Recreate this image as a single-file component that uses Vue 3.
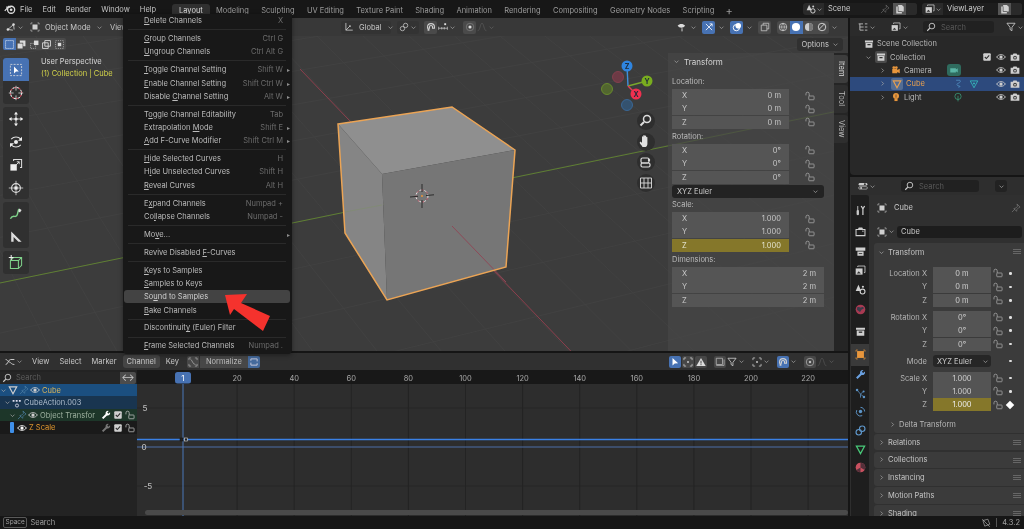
<template>
  <div class="app">
    <!-- shared icons -->
    <svg class="defs" width="0" height="0">
      <symbol id="i-lock" viewBox="0 0 16 16"><path d="M1.500 7V4.500a2.600 2.600 0 0 1 5.200 0V8" fill="none" stroke="currentColor" stroke-width="1.100"/><rect x="6" y="8" width="8.500" height="6" rx="1" fill="none" stroke="currentColor" stroke-width="1.100"/></symbol>
      <symbol id="i-eye" viewBox="0 0 16 16"><path d="M1 8c3.400-5 10.600-5 14 0c-3.400 5-10.600 5-14 0z" fill="none" stroke="currentColor" stroke-width="1.400"/><circle cx="8" cy="8" r="2.600" fill="currentColor"/></symbol>
      <symbol id="i-cam" viewBox="0 0 16 16"><path d="M1 4.500h3.500l1-2h5l1 2H15v9.500H1z" fill="currentColor"/><circle cx="8" cy="9" r="3" fill="#3a3a3a"/><circle cx="8" cy="9" r="1.400" fill="currentColor"/></symbol>
      <symbol id="i-search" viewBox="0 0 16 16"><circle cx="9.500" cy="6.500" r="4.500" fill="none" stroke="currentColor" stroke-width="1.400"/><path d="M6 10l-4 4" stroke="currentColor" stroke-width="1.800"/></symbol>
      <symbol id="i-down" viewBox="0 0 16 16"><path d="M3.500 6l4.500 4.500L12.500 6" fill="none" stroke="currentColor" stroke-width="1.600"/></symbol>
      <symbol id="i-right" viewBox="0 0 16 16"><path d="M6 3.500l4.500 4.500L6 12.500" fill="none" stroke="currentColor" stroke-width="1.600"/></symbol>
      <symbol id="i-cube" viewBox="0 0 16 16"><rect x="4" y="4" width="8" height="8" fill="currentColor"/><path d="M1.500 4V1.500H4M12 1.500h2.500V4M14.500 12v2.500H12M4 14.500H1.500V12" fill="none" stroke="currentColor" stroke-width="1"/></symbol>
      <symbol id="i-filter" viewBox="0 0 16 16"><path d="M1.500 2h13L9.500 8.500V14l-3-2V8.500z" fill="none" stroke="currentColor" stroke-width="1.300"/></symbol>
      <symbol id="i-pin" viewBox="0 0 16 16"><path d="M9.500 1.500l5 5-2 .8-3 3-.6 3L4.500 8.900l3-.7 3-3zM6.500 9.500L1.500 14.500" fill="none" stroke="currentColor" stroke-width="1.100"/></symbol>
      <symbol id="i-copy" viewBox="0 0 16 16"><path d="M2 4h3V1.500h6l3 3V12h-3v3H2z" fill="currentColor"/><path d="M5 4v8h6" fill="none" stroke="#333" stroke-width="1"/></symbol>
      <symbol id="i-layer" viewBox="0 0 16 16"><rect x="1" y="5" width="10" height="9" fill="currentColor"/><path d="M4 3V1.500h10.500V11H13" fill="none" stroke="currentColor" stroke-width="1.200"/><path d="M2.500 12.500l3-3.500 3 3.500z" fill="#333"/></symbol>
      <symbol id="i-scene" viewBox="0 0 16 16"><path d="M5 1L9 10H1z" fill="currentColor"/><circle cx="11" cy="11" r="3.500" fill="none" stroke="currentColor" stroke-width="1.600"/><circle cx="11.500" cy="4" r="1.600" fill="currentColor"/></symbol>
      <symbol id="i-box" viewBox="0 0 16 16"><path d="M1.500 2.500h13v3h-13zM2.500 6.500h11v7.500h-11z" fill="currentColor"/><rect x="5.500" y="8" width="5" height="2" fill="#333"/></symbol>
      <symbol id="i-mesh" viewBox="0 0 16 16"><path d="M2 3h12L8 14z" fill="none" stroke="currentColor" stroke-width="1.800"/></symbol>
      <symbol id="i-wrench" viewBox="0 0 16 16"><path d="M14.500 3.500l-2.700 2.400-1.800-1.800L12.400 1.500a4 4 0 0 0-5 5L1.500 12.300 3.700 14.500l5.900-5.900a4 4 0 0 0 4.900-5.100z" fill="currentColor"/></symbol>
      <symbol id="i-check" viewBox="0 0 16 16"><rect x="2" y="2" width="12" height="12" rx="1.500" fill="currentColor"/><path d="M4.500 8l2.500 2.500 4.500-5" fill="none" stroke="#2a2a2a" stroke-width="1.700"/></symbol>
      <symbol id="i-editor" viewBox="0 0 16 16"><path d="M1 12c4 0 4-8 8-8h6M1 4c3 0 3 3 6 4s3 4 8 4" fill="none" stroke="currentColor" stroke-width="1.500"/></symbol>
      <symbol id="i-tools" viewBox="0 0 16 16"><path d="M4 1.500v6M3 8h2v6H3z" stroke="currentColor" stroke-width="1.300" fill="currentColor"/><path d="M9 1.500l2.500 4 2.500-4M11.500 5.500V14.500" fill="none" stroke="currentColor" stroke-width="1.800"/></symbol>
      <symbol id="i-render" viewBox="0 0 16 16"><path d="M1.500 5h13v9h-13z" fill="none" stroke="currentColor" stroke-width="1.500"/><path d="M4 5l1.500-3h5L12 5z" fill="currentColor"/><circle cx="11.500" cy="7.500" r="1" fill="currentColor"/></symbol>
      <symbol id="i-print" viewBox="0 0 16 16"><path d="M1 2h14v5H1zM3.500 8h9v6h-9z" fill="currentColor"/><path d="M5.500 11h5" stroke="#333" stroke-width="1.300"/></symbol>
      <symbol id="i-pivot" viewBox="0 0 16 16"><path d="M1.500 5V1.500H5M11 1.500h3.500V5M14.500 11v3.500H11M5 14.500H1.500V11" fill="none" stroke="currentColor" stroke-width="1.200"/><circle cx="8" cy="8" r="1.500" fill="currentColor"/></symbol>
      <symbol id="i-snap" viewBox="0 0 16 16"><path d="M2.500 8a5.500 5.500 0 1 1 11 0v2h-3V8a2.500 2.500 0 0 0-5 0v2h-3z" fill="none" stroke="currentColor" stroke-width="1.800"/><path d="M2.500 11h3v3h-3z" fill="currentColor"/></symbol>
      <symbol id="i-world" viewBox="0 0 16 16"><circle cx="8" cy="8" r="7" fill="#a83a52"/><path d="M3 5c3-2 4 1 6 0s3-1 4 1c-2 2-3 1-4 3s-2 3-3 2-1-2-3-2z" fill="#3c3c4a"/></symbol>
      <symbol id="i-obj" viewBox="0 0 16 16"><rect x="3" y="3" width="10" height="10" fill="currentColor"/><path d="M1.500 4V1.500H4M12 1.500h2.500V4M14.500 12v2.500H12M4 14.500H1.500V12" fill="none" stroke="currentColor" stroke-width="1"/></symbol>
      <symbol id="i-part" viewBox="0 0 16 16"><circle cx="3" cy="3" r="1.800" fill="currentColor"/><circle cx="12.500" cy="5" r="1.500" fill="currentColor"/><circle cx="13" cy="13" r="1.800" fill="currentColor"/><path d="M4 4l4 5 5 4M8 9l4-4M8 9v5" fill="none" stroke="currentColor" stroke-width="1.100"/></symbol>
      <symbol id="i-phys" viewBox="0 0 16 16"><circle cx="8" cy="8" r="2.500" fill="currentColor"/><path d="M2.500 6a6 6 0 0 0 8 8M8 2a6 6 0 0 1 6 6" fill="none" stroke="currentColor" stroke-width="1.400"/></symbol>
      <symbol id="i-cons" viewBox="0 0 16 16"><circle cx="5.500" cy="10.500" r="4" fill="none" stroke="currentColor" stroke-width="1.700"/><circle cx="10.500" cy="5.500" r="4" fill="none" stroke="currentColor" stroke-width="1.700"/></symbol>
      <symbol id="i-mat" viewBox="0 0 16 16"><circle cx="8" cy="8" r="7" fill="#c8505f"/><path d="M8 8V1a7 7 0 0 1 6 10.500zM8 8l-6 3.500A7 7 0 0 0 8 15z" fill="#55303a"/></symbol>
    </svg>

    <!-- top bar -->
    <header class="topbar">
      <svg class="logo" viewBox="0 0 16 16"><circle cx="9.500" cy="9" r="4.700" fill="none" stroke="#ddd" stroke-width="1.800"/><circle cx="9.500" cy="9" r="1.800" fill="#ddd"/><path d="M1 10.500l6-6.500M3 5.500h6" stroke="#ddd" stroke-width="1.600"/></svg>
      <nav class="mainmenu">
        <span v-for="m in mainMenu" :key="m">{{ m }}</span>
      </nav>
      <nav class="tabs">
        <span v-for="t in workspaces" :key="t" :class="['tab', { active: t === 'Layout' }]">{{ t }}</span>
        <span class="tab plus">+</span>
      </nav>
      <div class="selector scene-sel">
        <svg class="ic"><use href="#i-scene" /></svg>
        <svg class="ic tiny"><use href="#i-down" /></svg>
        <span class="sel-name">Scene</span>
        <svg class="ic dim"><use href="#i-pin" /></svg>
        <span class="sel-btn"><svg class="ic"><use href="#i-copy" /></svg></span>
        <span class="sel-x"></span>
      </div>
      <div class="selector layer-sel">
        <svg class="ic"><use href="#i-layer" /></svg>
        <svg class="ic tiny"><use href="#i-down" /></svg>
        <span class="sel-name">ViewLayer</span>
        <span class="sel-btn"><svg class="ic"><use href="#i-copy" /></svg></span>
        <span class="sel-x"></span>
      </div>
    </header>

    <div class="work">
      <div class="left">
        <!-- 3d viewport -->
        <section class="viewport">
          <svg class="scene" viewBox="0 18 848 333">
            <line v-for="(l, i) in gridLines" :key="i" :x1="l[0]" :y1="l[1]" :x2="l[2]" :y2="l[3]" stroke="#444" stroke-width="0.7" />
            <line x1="-200" y1="324" x2="848" y2="109" stroke="#5f7f33" stroke-width="1" />
            <line x1="300" y1="69" x2="660" y2="444" stroke="#8e3f4d" stroke-width="1" />
            <polygon points="338,124 452,107 515,150 382,174" fill="#8f8f8f" />
            <polygon points="338,124 382,174 387,300 345,233" fill="#858585" />
            <polygon points="382,174 515,150 506,267 387,300" fill="#767676" />
            <line x1="452" y1="226" x2="506" y2="282" stroke="#8e4a58" stroke-width="1" />
            <line x1="345" y1="212" x2="382" y2="205" stroke="#7f8d70" stroke-width="0.7" />
            <polygon points="338,124 452,107 515,150 506,267 387,300 345,233" fill="none" stroke="#eba455" stroke-width="1.500" />
            <!-- 3d cursor -->
            <circle cx="422" cy="196" r="6" fill="none" stroke="#e8e8e8" stroke-width="1" stroke-dasharray="3 2" />
            <circle cx="422" cy="196" r="6" fill="none" stroke="#b9475a" stroke-width="1" stroke-dasharray="2 3" stroke-dashoffset="3" />
            <path d="M422 184v8M422 200v8M410 197l8-.7M426 195.500l8-.7" stroke="#2b2b2b" stroke-width="1" />
            <circle cx="422" cy="196" r="1" fill="#e8953a" />
            <!-- gizmo -->
            <line x1="628" y1="86" x2="627" y2="66" stroke="#3f8fdc" stroke-width="1.400" />
            <line x1="628" y1="86" x2="647" y2="81" stroke="#79a72c" stroke-width="1.400" />
            <line x1="628" y1="86" x2="636" y2="94" stroke="#e0405a" stroke-width="1.400" />
            <circle cx="618" cy="77" r="5.500" fill="#6d3a45" stroke="#8e4050" stroke-width="0.800" />
            <circle cx="607" cy="89" r="5.500" fill="#52662f" stroke="#71982b" stroke-width="0.800" />
            <circle cx="627" cy="105" r="5.500" fill="#34526f" stroke="#3a6fa5" stroke-width="0.800" />
            <circle cx="627" cy="66" r="5.500" fill="#2f85e0" />
            <circle cx="647" cy="81" r="5.500" fill="#79ad1f" />
            <circle cx="636" cy="94" r="5.500" fill="#f0304f" />
            <text x="627" y="68.500" class="gz">Z</text>
            <text x="647" y="83.500" class="gz">Y</text>
            <text x="636" y="96.500" class="gz">X</text>
            <!-- nav buttons -->
            <circle v-for="y in [121, 142, 162, 183]" :key="y" cx="646" :cy="y" r="9" fill="#2e2e2e" />
            <circle cx="647" cy="119" r="3.500" fill="none" stroke="#ddd" stroke-width="1.500" />
            <path d="M644 122l-3.500 3.500" stroke="#ddd" stroke-width="2" />
            <path d="M642 146c-2-2-2.800-3.500-2-4s1.500.5 2 1v-6c0-1 1.300-1 1.300 0v4v-5.200c0-1 1.400-1 1.400 0V141v-4.800c0-1 1.400-1 1.400 0V141v-3.500c0-1 1.300-1 1.300 0V144c0 1.500-1 3-2 3h-3z" fill="#e0e0e0" />
            <rect x="641" y="158" width="8" height="5" rx="1.500" fill="none" stroke="#ddd" stroke-width="1.200" />
            <rect x="641" y="163" width="9" height="4" rx="1.500" fill="none" stroke="#ddd" stroke-width="1.200" />
            <circle cx="649" cy="160" r="1.200" fill="#ddd" />
            <path d="M640.500 178h11v10h-11zM640.500 183h11M644 178v10M648 178v10" fill="none" stroke="#ddd" stroke-width="0.900" />
          </svg>

          <div class="vp-head">
            <span class="vp-mode">
              <svg class="ic" viewBox="0 0 16 16"><path d="M3 12L12 4M3 12l8 1M12 4l1 8" fill="none" stroke="#ddd" stroke-width="1.200"/><circle cx="3" cy="12" r="2" fill="#ddd"/><circle cx="12" cy="4" r="2" fill="#ddd"/></svg>
              <svg class="ic tiny"><use href="#i-down" /></svg>
            </span>
            <span class="vp-select">
              <svg class="ic"><use href="#i-cube" /></svg>
              Object Mode
              <svg class="ic tiny"><use href="#i-down" /></svg>
            </span>
            <span class="vp-view">View</span>
            <span class="vp-orient">
              <span class="vp-global">
                <svg class="ic" viewBox="0 0 16 16"><path d="M3 1.500V13h11M3 13l6-6" fill="none" stroke="#ccc" stroke-width="1.300"/><circle cx="9.500" cy="6.500" r="1.500" fill="#ccc"/></svg>
                Global
                <svg class="ic tiny"><use href="#i-down" /></svg>
              </span>
              <span class="vp-link">
                <svg class="ic" viewBox="0 0 16 16"><circle cx="5.500" cy="10.500" r="3.500" fill="none" stroke="#ccc" stroke-width="1.200"/><circle cx="10.500" cy="5.500" r="3.500" fill="none" stroke="#ccc" stroke-width="1.200"/></svg>
                <svg class="ic tiny"><use href="#i-down" /></svg>
              </span>
              <span class="hl-gray"><svg class="ic" viewBox="0 0 16 16"><use href="#i-snap" /></svg></span>
              <svg class="ic" viewBox="0 0 16 16"><path d="M1 10h14M1 7.500v5M15 7.500v5M6 8v4M10 8v4" fill="none" stroke="#ccc" stroke-width="1.100"/><rect x="10" y="2" width="3" height="3" fill="#ddd"/></svg>
              <svg class="ic tiny"><use href="#i-down" /></svg>
              <span class="hl-gray gap"><svg class="ic" viewBox="0 0 16 16"><circle cx="8" cy="8" r="2.500" fill="#ddd"/><circle cx="8" cy="8" r="6" fill="none" stroke="#888"/></svg></span>
              <svg class="ic faint" viewBox="0 0 16 16"><path d="M1 14c4 0 4-12 7-12s3 12 7 12" fill="none" stroke="#888" stroke-width="1.200"/></svg>
              <svg class="ic tiny faint"><use href="#i-down" /></svg>
            </span>
            <span class="vp-right">
              <svg class="ic" viewBox="0 0 16 16"><path d="M1 6c3-4 9-4 12 0c-3 4-9 4-12 0z" fill="#ddd"/><path d="M8 10v5" stroke="#ddd" stroke-width="1.500"/></svg>
              <svg class="ic tiny"><use href="#i-down" /></svg>
              <span class="hl-blue"><svg class="ic" viewBox="0 0 16 16"><path d="M3 13L13 3M13 3H9M13 3v4M3 3l10 10" stroke="#fff" stroke-width="1.300" fill="none"/></svg></span>
              <svg class="ic tiny"><use href="#i-down" /></svg>
              <span class="hl-blue"><svg class="ic" viewBox="0 0 16 16"><circle cx="7" cy="9" r="5" fill="none" stroke="#fff" stroke-width="1.500"/><circle cx="10" cy="6" r="4.500" fill="#fff"/></svg></span>
              <svg class="ic tiny"><use href="#i-down" /></svg>
              <span class="hl-gray"><svg class="ic" viewBox="0 0 16 16"><path d="M2 5h9v9H2zM5 5V2h9v9h-3" fill="none" stroke="#ccc" stroke-width="1.200"/></svg></span>
              <span class="shading">
                <span><svg class="ic" viewBox="0 0 16 16"><circle cx="8" cy="8" r="6" fill="none" stroke="#ddd" stroke-width="1.100"/><path d="M2 8h12M8 2c-3 4-3 8 0 12M8 2c3 4 3 8 0 12" fill="none" stroke="#ddd" stroke-width="0.900"/></svg></span>
                <span class="on"><svg class="ic" viewBox="0 0 16 16"><circle cx="8" cy="8" r="6.500" fill="#fff"/></svg></span>
                <span><svg class="ic" viewBox="0 0 16 16"><circle cx="8" cy="8" r="6.500" fill="#ccc"/><path d="M8 1.500a6.500 6.500 0 0 1 0 13z" fill="#777"/></svg></span>
                <span><svg class="ic" viewBox="0 0 16 16"><circle cx="8" cy="8" r="6" fill="none" stroke="#ddd" stroke-width="1.400"/><path d="M3 12L12 3" stroke="#ddd" stroke-width="1.400"/></svg></span>
              </span>
              <svg class="ic tiny"><use href="#i-down" /></svg>
            </span>
          </div>

          <div class="vp-sub">
            <span class="selmodes">
              <span class="on"><svg class="ic" viewBox="0 0 16 16"><rect x="1" y="1" width="14" height="14" fill="none" stroke="#fff" stroke-width="1.300" stroke-dasharray="2 1.500"/></svg></span>
              <span><svg class="ic" viewBox="0 0 16 16"><path d="M1 6h9v9H1zM5 5V1h10v10h-4V5z" fill="#ddd"/></svg></span>
              <span><svg class="ic" viewBox="0 0 16 16"><path d="M7 1h8v8H7z" fill="#ddd"/><path d="M1 6h9v9H1z" fill="none" stroke="#ddd" stroke-dasharray="2 1.500"/></svg></span>
              <span><svg class="ic" viewBox="0 0 16 16"><path d="M5 1h10v10H5z" fill="none" stroke="#ddd" stroke-width="1.600"/><path d="M1 5h10v10H1z" fill="none" stroke="#ddd" stroke-width="1.600"/></svg></span>
              <span><svg class="ic" viewBox="0 0 16 16"><rect x="5" y="5" width="6" height="6" fill="#ddd"/><rect x="1" y="1" width="14" height="14" fill="none" stroke="#ddd" stroke-dasharray="2 2"/></svg></span>
            </span>
            <span class="options">Options <svg class="ic tiny"><use href="#i-down" /></svg></span>
          </div>

          <div class="persp">
            <div>User Perspective</div>
            <div class="persp-sel">(1) Collection | Cube</div>
          </div>

          <!-- toolbar -->
          <div class="toolbar">
            <div class="tool-group">
              <span class="tool active"><svg viewBox="0 0 20 20"><rect x="3" y="3" width="14" height="14" fill="none" stroke="#ddd" stroke-dasharray="2.500 1.500"/><path d="M7.500 5.500v9l2.500-2.500 3.500-.2z" fill="#fff"/></svg></span>
              <span class="tool"><svg viewBox="0 0 20 20"><circle cx="10" cy="10" r="7" fill="none" stroke="#eee" stroke-width="1.300" stroke-dasharray="3 2.500"/><circle cx="10" cy="10" r="7" fill="none" stroke="#d2475a" stroke-width="1.300" stroke-dasharray="2.500 3" stroke-dashoffset="3"/><path d="M10 1v6M10 13v6M1 10h6M13 10h6" stroke="#ddd"/></svg></span>
            </div>
            <div class="tool-group">
              <span class="tool"><svg viewBox="0 0 20 20"><path d="M10 2v16M2 10h16" stroke="#ddd" stroke-width="1.100"/><path d="M10 1l2.500 3.500h-5zM10 19l2.500-3.500h-5zM1 10l3.500-2.500v5zM19 10l-3.500-2.500v5z" fill="#eee"/><circle cx="10" cy="10" r="2" fill="#eee"/></svg></span>
              <span class="tool"><svg viewBox="0 0 20 20"><path d="M4 6.500a8 8 0 0 1 12 0M16 13.500a8 8 0 0 1-12 0" fill="none" stroke="#ddd" stroke-width="1.400"/><path d="M17.500 3.500v5h-5zM2.500 16.500v-5h5z" fill="#eee"/><circle cx="10" cy="10" r="2.500" fill="#eee"/></svg></span>
              <span class="tool"><svg viewBox="0 0 20 20"><rect x="3" y="9" width="8" height="8" fill="#eee"/><path d="M7 5V3h10v10h-2" fill="none" stroke="#ddd" stroke-width="1.300"/><path d="M10 10l4-4M11 6h3v3" fill="none" stroke="#ddd" stroke-width="1.200"/></svg></span>
              <span class="tool"><svg viewBox="0 0 20 20"><circle cx="10" cy="10" r="5.500" fill="none" stroke="#ddd" stroke-width="1.400"/><path d="M10 1v18M1 10h18" stroke="#ddd"/><rect x="8" y="8" width="4" height="4" fill="#eee"/></svg></span>
            </div>
            <div class="tool-group">
              <span class="tool"><svg viewBox="0 0 20 20"><path d="M3 16c3-6 6-1 8-4s1-7 3-8" fill="none" stroke="#7fd28a" stroke-width="1.800"/><path d="M14 3l3 2-2 3-2-1z" fill="#ddd"/></svg></span>
              <span class="tool"><svg viewBox="0 0 20 20"><path d="M4 3v13h13zM7 10v6h6z" fill="#ddd" fill-rule="evenodd"/></svg></span>
            </div>
            <div class="tool-group">
              <span class="tool"><svg viewBox="0 0 20 20"><path d="M3 7l4-4h10v10l-4 4H3zM3 7h10v10M13 7l4-4" fill="none" stroke="#7fd28a" stroke-width="1.300"/><path d="M1 3h6M4 0v6" stroke="#eee" stroke-width="1.300"/></svg></span>
            </div>
          </div>

          <!-- sidebar -->
          <aside class="npanel">
            <div class="np-title"><svg class="ic tiny"><use href="#i-down" /></svg> Transform</div>
            <template v-for="g in transformGroups" :key="g.label">
              <div v-if="g.select" class="np-select">{{ g.select }} <svg class="ic tiny"><use href="#i-down" /></svg></div>
              <div v-else class="np-group">
                <div class="np-label">{{ g.label }}</div>
                <div v-for="r in g.rows" :key="r[0]" class="np-row">
                  <div :class="['np-field', { wide: !g.lock, key: r[2] }]">
                    <span>{{ r[0] }}</span><span>{{ r[1] }}</span>
                  </div>
                  <svg v-if="g.lock" class="ic lock"><use href="#i-lock" /></svg>
                </div>
              </div>
            </template>
          </aside>
          <div class="np-tabs">
            <span class="active">Item</span>
            <span>Tool</span>
            <span>View</span>
          </div>
        </section>

        <!-- graph editor -->
        <section class="timeline">
          <div class="tl-head">
            <svg class="ic"><use href="#i-editor" /></svg>
            <svg class="ic tiny"><use href="#i-down" /></svg>
            <span class="tl-menu">
              <span v-for="m in graphMenu" :key="m" :class="{ open: m === 'Channel' }">{{ m }}</span>
            </span>
            <span class="normalize">
              <span class="nm-icon"><svg class="ic" viewBox="0 0 16 16"><path d="M1.500 5V1.500H5M11 1.500h3.500V5M14.500 11v3.500H11M5 14.500H1.500V11M4 4c3 0 3 8 8 8" fill="none" stroke="#bbb"/></svg></span>
              <span class="nm-text">Normalize</span>
              <span class="nm-auto"><svg class="ic" viewBox="0 0 16 16"><path d="M3 6V3h10v4M13 10v3H3V9" fill="none" stroke="#ccd" stroke-width="1.500"/></svg></span>
            </span>
            <span class="tl-right">
              <span class="blue-btn"><svg class="ic" viewBox="0 0 16 16"><path d="M4 1.500v12l3.500-3 5.500-.5z" fill="#fff"/></svg></span>
              <span class="gray-btn"><svg class="ic"><use href="#i-pivot" /></svg></span>
              <span class="gray-btn"><svg class="ic" viewBox="0 0 16 16"><path d="M8 1.500L15.500 14.500H.5z" fill="#ddd"/><path d="M8 6v4.500M8 11.500v1.500" stroke="#333" stroke-width="1.400"/></svg></span>
              <span class="gray-btn gap"><svg class="ic" viewBox="0 0 16 16"><path d="M2 2h10v10H2zM2 13.500h12.500V4" fill="none" stroke="#bbb" stroke-width="1.200"/></svg></span>
              <svg class="ic"><use href="#i-filter" /></svg>
              <svg class="ic tiny"><use href="#i-down" /></svg>
              <svg class="ic gap"><use href="#i-pivot" /></svg>
              <svg class="ic tiny"><use href="#i-down" /></svg>
              <span class="blue-btn gap"><svg class="ic"><use href="#i-snap" /></svg></span>
              <svg class="ic tiny"><use href="#i-down" /></svg>
              <span class="gray-btn gap"><svg class="ic" viewBox="0 0 16 16"><circle cx="8" cy="8" r="6" fill="none" stroke="#999" stroke-width="1.600"/><circle cx="8" cy="8" r="2" fill="#bbb"/></svg></span>
              <svg class="ic faint" viewBox="0 0 16 16"><path d="M1 14c4 0 4-12 7-12s3 12 7 12" fill="none" stroke="#888" stroke-width="1.200"/></svg>
              <svg class="ic tiny faint"><use href="#i-down" /></svg>
            </span>
          </div>
          <div class="tl-body">
            <div class="channels">
              <div class="ch-search">
                <span class="ch-input"><svg class="ic"><use href="#i-search" /></svg> Search</span>
                <span class="ch-swap">↔</span>
              </div>
              <div class="ch-row c-obj">
                <svg class="ic tiny"><use href="#i-down" /></svg>
                <svg class="ic"><use href="#i-mesh" /></svg>
                <svg class="ic pinned"><use href="#i-pin" /></svg>
                <svg class="ic"><use href="#i-eye" /></svg>
                <span class="c-name gold">Cube</span>
              </div>
              <div class="ch-row c-act">
                <svg class="ic tiny ind"><use href="#i-down" /></svg>
                <svg class="ic" viewBox="0 0 16 16"><path d="M1 3h3v3H1zM6 3h3v3H6zM11 3h3v3h-3z" fill="#dde"/><circle cx="8" cy="12" r="2.500" fill="none" stroke="#dde" stroke-width="1.300"/></svg>
                <span class="c-name">CubeAction.003</span>
              </div>
              <div class="ch-row c-grp">
                <svg class="ic tiny ind"><use href="#i-down" /></svg>
                <svg class="ic pinned"><use href="#i-pin" /></svg>
                <svg class="ic"><use href="#i-eye" /></svg>
                <span class="c-name clip">Object Transfor</span>
                <span class="c-tail">
                  <svg class="ic white"><use href="#i-wrench" /></svg>
                  <svg class="ic"><use href="#i-check" /></svg>
                  <svg class="ic"><use href="#i-lock" /></svg>
                </span>
              </div>
              <div class="ch-row c-cur">
                <i class="swatch"></i>
                <svg class="ic white"><use href="#i-eye" /></svg>
                <span class="c-name orange">Z Scale</span>
                <span class="c-tail">
                  <svg class="ic faded"><use href="#i-wrench" /></svg>
                  <svg class="ic"><use href="#i-check" /></svg>
                  <svg class="ic"><use href="#i-lock" /></svg>
                </span>
              </div>
            </div>
            <svg class="graph" viewBox="137 369 711 147">
              <rect x="137" y="369" width="711" height="147" fill="#2d2d2d" />
              <line v-for="y in [407, 485]" :key="y" x1="137" :y1="y" x2="848" :y2="y" stroke="#272727" />
              <line v-for="f in frames" :key="f.n" :x1="f.x" y1="383" :x2="f.x" y2="516" stroke="#232323" />
              <rect x="137" y="369" width="711" height="14" fill="#181818" />
              <text v-for="f in frames" :key="f.n" :x="f.x" y="379.500" class="frame">{{ f.n }}</text>
              <line x1="137" y1="446" x2="848" y2="446" stroke="#4d6ea8" stroke-width="1" />
              <line x1="137" y1="438.500" x2="848" y2="438.500" stroke="#3a80e4" stroke-width="1.500" />
              <text x="145" y="410" class="val">5</text>
              <text x="144" y="449" class="val">0</text>
              <text x="148" y="488" class="val">-5</text>
              <line x1="183" y1="383" x2="183" y2="516" stroke="#4b78ba" />
              <rect x="175" y="371" width="16" height="11.500" rx="2.500" fill="#4772b3" />
              <text x="183" y="380" class="pill">1</text>
              <rect x="180" y="437" width="3" height="3" fill="#222" stroke="#111" stroke-width="0.500" />
              <rect x="184.500" y="437" width="3" height="3" fill="#222" stroke="#ddd" stroke-width="0.600" />
              <rect x="145" y="509" width="703" height="5" rx="2.500" fill="#4a4a4a" />
            </svg>
          </div>
        </section>
      </div>

      <div class="right">
        <!-- outliner -->
        <section class="outliner">
          <div class="ol-head">
            <svg class="ic" viewBox="0 0 16 16"><path d="M1 3h7M3 3v10h6M3 8h6M11 3h4M11 8h4M11 13h4" fill="none" stroke="#ccc" stroke-width="1.300"/></svg>
            <svg class="ic tiny"><use href="#i-down" /></svg>
            <svg class="ic ml"><use href="#i-layer" /></svg>
            <svg class="ic tiny"><use href="#i-down" /></svg>
            <span class="search ol-search"><svg class="ic"><use href="#i-search" /></svg> Search</span>
            <svg class="ic"><use href="#i-filter" /></svg>
            <svg class="ic tiny"><use href="#i-down" /></svg>
          </div>
          <div class="ol-row">
            <svg class="ic"><use href="#i-box" /></svg>
            <span>Scene Collection</span>
          </div>
          <div class="ol-row">
            <svg class="ic tiny"><use href="#i-down" /></svg>
            <span class="icon-bg"><svg class="ic"><use href="#i-box" /></svg></span>
            <span>Collection</span>
            <span class="ol-tail">
              <svg class="ic"><use href="#i-check" /></svg>
              <svg class="ic"><use href="#i-eye" /></svg>
              <svg class="ic"><use href="#i-cam" /></svg>
            </span>
          </div>
          <div v-for="o in objects" :key="o.name" :class="['ol-row', 'ol-child', { selected: o.selected }]">
            <svg class="ic tiny"><use href="#i-right" /></svg>
            <span v-if="o.selected" class="icon-bg orange-bg"><svg class="ic orange-ic"><use href="#i-mesh" /></svg></span>
            <svg v-else-if="o.name === 'Camera'" class="ic" viewBox="0 0 16 16"><path d="M2 6h8v7H2zM10 8l4-2v7l-4-2" fill="#e8963c"/><circle cx="4.500" cy="4" r="2.200" fill="#e8963c"/><circle cx="8.500" cy="4" r="2.200" fill="#e8963c"/></svg>
            <svg v-else class="ic" viewBox="0 0 16 16"><circle cx="8" cy="6.500" r="4.800" fill="#e8963c"/><rect x="5.500" y="11" width="5" height="3.500" fill="#e8963c"/><path d="M8 4v5" stroke="#333"/></svg>
            <span class="ol-name">{{ o.name }}</span>
            <span class="ol-data" :style="{ marginLeft: o.dataX + 'px' }">
              <span v-if="o.name === 'Camera'" class="teal-box"><svg class="ic" viewBox="0 0 16 16"><path d="M2 5h9v7H2zM11 7l3-2v7l-3-2" fill="#5bb5a5"/></svg></span>
              <template v-if="o.selected">
                <svg class="ic" viewBox="0 0 16 16"><path d="M5 2h6c2 2 0 4-3 5s-2 4 3 5M11 12l-2-2M11 12l-2 2" fill="none" stroke="#5a9fd0" stroke-width="1"/></svg>
                <svg class="ic teal" viewBox="0 0 16 16"><path d="M2 3h12L8 14z" fill="none" stroke="#35c0c0" stroke-width="1.300"/><circle cx="8" cy="7" r="1.500" fill="#35c0c0"/></svg>
              </template>
              <svg v-if="o.name === 'Light'" class="ic" viewBox="0 0 16 16"><circle cx="8" cy="7" r="5" fill="none" stroke="#3fb48a" stroke-width="1"/><path d="M8 6v9" stroke="#3fb48a"/></svg>
            </span>
            <span class="ol-tail">
              <svg class="ic"><use href="#i-eye" /></svg>
              <svg class="ic"><use href="#i-cam" /></svg>
            </span>
          </div>
        </section>

        <!-- properties -->
        <section class="props">
          <div class="pr-head">
            <svg class="ic" viewBox="0 0 16 16"><rect x="1" y="3" width="14" height="4" rx="2" fill="#ccc"/><rect x="1" y="9" width="14" height="4" rx="2" fill="none" stroke="#ccc"/><circle cx="11" cy="5" r="1.600" fill="#333"/><circle cx="5" cy="11" r="1.600" fill="#ccc"/></svg>
            <svg class="ic tiny"><use href="#i-down" /></svg>
            <span class="search pr-search"><svg class="ic"><use href="#i-search" /></svg> Search</span>
            <span class="pr-opt"><svg class="ic tiny"><use href="#i-down" /></svg></span>
          </div>
          <div class="pr-body">
            <div class="pr-tabs">
              <span v-for="t in propTabs" :key="t.id" :class="['pr-tab', { active: t.active }]" :style="{ height: t.h + 'px', color: t.color }">
                <svg class="ic big"><use :href="'#' + t.id" /></svg>
              </span>
            </div>
            <div class="pr-content">
              <div class="crumb">
                <svg class="ic"><use href="#i-cube" /></svg>
                <span>Cube</span>
                <svg class="ic pin-r"><use href="#i-pin" /></svg>
              </div>
              <div class="name-row">
                <svg class="ic"><use href="#i-cube" /></svg>
                <svg class="ic tiny"><use href="#i-down" /></svg>
                <span class="name-field">Cube</span>
              </div>
              <div class="panel open">
                <div class="panel-head">
                  <svg class="ic tiny"><use href="#i-down" /></svg>
                  <span>Transform</span>
                  <i class="grip"></i>
                </div>
                <div v-for="(g, gi) in propGroups" :key="gi" class="pf-group">
                  <div v-for="r in g" :key="r.label" class="pf-row">
                    <span class="pf-label">{{ r.label }}</span>
                    <span :class="['pf-field', { key: r.key }]">{{ r.value }}</span>
                    <svg class="ic lock"><use href="#i-lock" /></svg>
                    <i :class="['dot', { diamond: r.key }]"></i>
                  </div>
                </div>
                <div class="pf-group">
                  <div class="pf-row">
                    <span class="pf-label">Mode</span>
                    <span class="pf-select">XYZ Euler <svg class="ic tiny"><use href="#i-down" /></svg></span>
                    <span class="lock-space"></span>
                    <i class="dot"></i>
                  </div>
                </div>
                <div v-for="(g, gi) in scaleGroups" :key="'s' + gi" class="pf-group">
                  <div v-for="r in g" :key="r.label" class="pf-row">
                    <span class="pf-label">{{ r.label }}</span>
                    <span :class="['pf-field', { key: r.key }]">{{ r.value }}</span>
                    <svg class="ic lock"><use href="#i-lock" /></svg>
                    <i :class="['dot', { diamond: r.key }]"></i>
                  </div>
                </div>
                <div class="delta"><svg class="ic tiny"><use href="#i-right" /></svg> Delta Transform</div>
              </div>
              <div v-for="p in closedPanels" :key="p" class="panel">
                <div class="panel-head">
                  <svg class="ic tiny"><use href="#i-right" /></svg>
                  <span>{{ p }}</span>
                  <i class="grip"></i>
                </div>
              </div>
            </div>
          </div>
        </section>
      </div>
    </div>

    <footer class="status">
      <span class="kbd">Space</span>
      <span>Search</span>
      <span class="status-right">
        <svg class="ic" viewBox="0 0 16 16"><path d="M3 4l8-2 3 8-8 3zM2 2l12 12" fill="none" stroke="#aaa" stroke-width="1.100"/></svg>
        <i class="st-sep"></i>
        4.3.2
      </span>
    </footer>

    <!-- channel menu -->
    <div class="menu">
      <template v-for="(item, i) in channelMenu" :key="i">
        <div v-if="item === '-'" class="menu-sep"></div>
        <div v-else :class="['menu-row', { hover: item.hover }]">
          <span class="menu-label">{{ parts(item.t)[0] }}<u>{{ parts(item.t)[1] }}</u>{{ parts(item.t)[2] }}</span>
          <span class="menu-key">{{ item.k }}</span>
          <span class="menu-sub">{{ item.sub ? '▸' : '' }}</span>
        </div>
      </template>
    </div>

    <svg class="arrow" viewBox="0 0 60 45">
      <polygon points="5,6 27,5 21,14 50,27 43,42 14,20 10,26" fill="#f5322d" />
    </svg>
  </div>
</template>

<script setup>
const mainMenu = ['File', 'Edit', 'Render', 'Window', 'Help']
const workspaces = ['Layout', 'Modeling', 'Sculpting', 'UV Editing', 'Texture Paint', 'Shading', 'Animation', 'Rendering', 'Compositing', 'Geometry Nodes', 'Scripting']
const graphMenu = ['View', 'Select', 'Marker', 'Channel', 'Key']

const parts = (text) => {
  const i = text.indexOf('&')
  return [text.slice(0, i), text[i + 1], text.slice(i + 2)]
}

const channelMenu = [
  { t: '&Delete Channels', k: 'X' },
  '-',
  { t: '&Group Channels', k: 'Ctrl G' },
  { t: '&Ungroup Channels', k: 'Ctrl Alt G' },
  '-',
  { t: '&Toggle Channel Setting', k: 'Shift W', sub: true },
  { t: '&Enable Channel Setting', k: 'Shift Ctrl W', sub: true },
  { t: 'Disable &Channel Setting', k: 'Alt W', sub: true },
  '-',
  { t: 'T&oggle Channel Editability', k: 'Tab' },
  { t: 'Extrapolation &Mode', k: 'Shift E', sub: true },
  { t: '&Add F-Curve Modifier', k: 'Shift Ctrl M', sub: true },
  '-',
  { t: '&Hide Selected Curves', k: 'H' },
  { t: 'H&ide Unselected Curves', k: 'Shift H' },
  { t: '&Reveal Curves', k: 'Alt H' },
  '-',
  { t: 'E&xpand Channels', k: 'Numpad +' },
  { t: 'Co&llapse Channels', k: 'Numpad -' },
  '-',
  { t: 'Mo&ve...', k: '', sub: true },
  '-',
  { t: 'Revive Disabled &F-Curves', k: '' },
  '-',
  { t: '&Keys to Samples', k: '' },
  { t: '&Samples to Keys', k: '' },
  { t: 'So&und to Samples', k: '', hover: true },
  { t: '&Bake Channels', k: '' },
  '-',
  { t: 'Discontinuit&y (Euler) Filter', k: '' },
  '-',
  { t: '&Frame Selected Channels', k: 'Numpad .' }
]

const transformGroups = [
  { label: 'Location:', lock: true, rows: [['X', '0 m'], ['Y', '0 m'], ['Z', '0 m']] },
  { label: 'Rotation:', lock: true, rows: [['X', '0°'], ['Y', '0°'], ['Z', '0°']] },
  { label: 'euler', select: 'XYZ Euler' },
  { label: 'Scale:', lock: true, rows: [['X', '1.000'], ['Y', '1.000'], ['Z', '1.000', true]] },
  { label: 'Dimensions:', lock: false, rows: [['X', '2 m'], ['Y', '2 m'], ['Z', '2 m']] }
]

const objects = [
  { name: 'Camera', dataX: 14 },
  { name: 'Cube', dataX: 18, selected: true },
  { name: 'Light', dataX: 20 }
]

const propTabs = [
  { id: 'i-tools', h: 23, color: '#d0d0d0' },
  { id: 'i-render', h: 20.5, color: '#d0d0d0' },
  { id: 'i-print', h: 19, color: '#d0d0d0' },
  { id: 'i-layer', h: 19.5, color: '#d0d0d0' },
  { id: 'i-scene', h: 18.5, color: '#d0d0d0' },
  { id: 'i-world', h: 20.5, color: '#c0405a' },
  { id: 'i-box', h: 24, color: '#d0d0d0' },
  { id: 'i-obj', h: 22, color: '#e8963c', active: true },
  { id: 'i-wrench', h: 18.5, color: '#6aa0e0' },
  { id: 'i-part', h: 18, color: '#5d95c8' },
  { id: 'i-phys', h: 19, color: '#5d95c8' },
  { id: 'i-cons', h: 19, color: '#5d95c8' },
  { id: 'i-mesh', h: 18.5, color: '#48c878' },
  { id: 'i-mat', h: 18.5, color: '#d05a6a' }
]

const propGroups = [
  [{ label: 'Location X', value: '0 m' }, { label: 'Y', value: '0 m' }, { label: 'Z', value: '0 m' }],
  [{ label: 'Rotation X', value: '0°' }, { label: 'Y', value: '0°' }, { label: 'Z', value: '0°' }]
]
const scaleGroups = [
  [{ label: 'Scale X', value: '1.000' }, { label: 'Y', value: '1.000' }, { label: 'Z', value: '1.000', key: true }]
]
const closedPanels = ['Relations', 'Collections', 'Instancing', 'Motion Paths', 'Shading']

const frames = []
for (let n = 20; n <= 220; n += 20) {
  frames.push({ n, x: 180 + n * 2.855 })
}

// ground plane grid, projected around the world origin
const project = (u, v) => {
  const w = 1 - 0.035 * u + 0.012 * v
  return [422 + (34 * u + 46 * v) / w, 196 + (36 * u - 9.5 * v) / w]
}
const gridLines = []
for (let i = -14; i <= 14; i++) {
  gridLines.push([...project(i, -14), ...project(i, 14)])
  gridLines.push([...project(-14, i), ...project(14, i)])
}
</script>

<style scoped>
.app {
  position: relative;
  width: 1024px;
  height: 529px;
  overflow: hidden;
  display: flex;
  flex-direction: column;
  background: #151515;
  color: #c8c8c8;
  font-family: Inter, "Liberation Sans", sans-serif;
  font-size: 7.500px;
  filter: blur(0.4px);
}

.defs {
  position: absolute;
}

.ic {
  width: 10px;
  height: 10px;
  flex: none;
  color: #cfcfcf;
}

.ic.tiny {
  width: 7px;
  height: 7px;
  color: #a8a8a8;
}

.gap {
  margin-left: 6px;
}

.faint {
  opacity: 0.4;
}

/* top bar */
.topbar {
  height: 18px;
  flex: none;
  display: flex;
  align-items: center;
  background: #171717;
}

.logo {
  width: 12px;
  height: 12px;
  margin-left: 4px;
}

.mainmenu {
  display: flex;
  gap: 10px;
  margin-left: 4px;
  width: 152px;
  color: #c4c4c4;
}

.tabs {
  display: flex;
  align-self: flex-end;
  height: 14px;
  color: #9c9c9c;
}

.tab {
  padding: 0 6.200px;
  line-height: 14px;
  white-space: nowrap;
}

.tab.active {
  background: #303030;
  border-radius: 3px 3px 0 0;
  color: #ddd;
  padding: 0 7px;
}

.tab.plus {
  font-size: 11px;
  padding: 0 5px;
}

.selector {
  position: absolute;
  top: 3px;
  height: 12px;
  display: flex;
  align-items: center;
  background: #2a2a2a;
  border-radius: 3px;
  padding-left: 3px;
  box-sizing: border-box;
}

.scene-sel {
  left: 803px;
  width: 114px;
}

.layer-sel {
  left: 922px;
  width: 100px;
}

.sel-name {
  flex: 1;
  background: #1d1d1d;
  height: 12px;
  line-height: 12px;
  padding-left: 4px;
  margin-left: 1px;
  color: #d0d0d0;
}

.sel-btn {
  background: #555;
  height: 12px;
  width: 13px;
  display: flex;
  align-items: center;
  justify-content: center;
}

.sel-x {
  width: 11px;
  height: 12px;
  background: #2a2a2a;
  border-radius: 0 3px 3px 0;
}

.scene-sel .dim {
  color: #666;
  margin-left: -13px;
  margin-right: 3px;
}

/* layout */
.work {
  flex: 1;
  min-height: 0;
  display: flex;
  gap: 2px;
}

.left {
  width: 848px;
  flex: none;
  display: flex;
  flex-direction: column;
  gap: 2px;
}

.right {
  width: 174px;
  flex: none;
  min-width: 0;
  display: flex;
  flex-direction: column;
  gap: 2px;
}

/* viewport */
.viewport {
  position: relative;
  height: 333px;
  flex: none;
  background: #3c3c3c;
  overflow: hidden;
}

.scene {
  position: absolute;
  inset: 0;
  width: 848px;
  height: 333px;
}

.gz {
  font-size: 7px;
  font-weight: 700;
  text-anchor: middle;
  fill: #1c2a3a;
}

.vp-head {
  position: relative;
  height: 18px;
  display: flex;
  align-items: center;
  background: #383838;
  padding-left: 6px;
}

.vp-mode {
  display: flex;
  align-items: center;
  gap: 1px;
  width: 24px;
}

.vp-select {
  display: flex;
  align-items: center;
  gap: 5px;
  width: 80px;
}

.vp-view {
  color: #c4c4c4;
}

.vp-orient {
  position: absolute;
  left: 341px;
  display: flex;
  align-items: center;
  gap: 1px;
}

.vp-global {
  width: 50px;
  height: 13px;
  background: #333;
  border-radius: 3px;
  display: flex;
  align-items: center;
  gap: 5px;
  padding-left: 3px;
  box-sizing: border-box;
}

.vp-link {
  display: flex;
  align-items: center;
  gap: 1px;
  background: #333;
  border-radius: 3px;
  height: 13px;
  padding: 0 2px;
  margin: 0 4px 0 5px;
}

.vp-right {
  position: absolute;
  left: 677px;
  display: flex;
  align-items: center;
  gap: 2.500px;
}

.hl-blue,
.hl-gray {
  width: 13px;
  height: 13px;
  border-radius: 2px;
  display: flex;
  align-items: center;
  justify-content: center;
  background: #4772b3;
  margin-left: 3px;
}

.hl-gray {
  background: #4a4a4a;
}

.vp-orient .hl-gray {
  margin-left: 0;
}

.vp-orient .hl-gray.gap {
  margin-left: 6px;
}

.shading {
  display: flex;
  background: #4a4a4a;
  border-radius: 3px;
  margin-left: 3px;
}

.shading span {
  width: 13px;
  height: 13px;
  display: flex;
  align-items: center;
  justify-content: center;
}

.shading .on {
  background: #4772b3;
}

.vp-sub {
  position: relative;
  height: 16px;
  display: flex;
  align-items: center;
  justify-content: space-between;
  padding: 0 5px 0 3px;
}

.selmodes {
  display: flex;
  background: #4a4a4a;
  border-radius: 2px;
}

.selmodes span {
  width: 12.500px;
  height: 12px;
  display: flex;
  align-items: center;
  justify-content: center;
}

.selmodes .on {
  background: #4772b3;
  border-radius: 2px 0 0 2px;
}

.selmodes .ic {
  width: 9px;
  height: 9px;
}

.options {
  display: flex;
  align-items: center;
  gap: 3px;
  background: #303030;
  height: 13px;
  padding: 0 4px 0 5px;
  border-radius: 3px;
}

.persp {
  position: absolute;
  left: 41px;
  top: 38px;
  line-height: 12px;
  color: #d8d8d8;
}

.persp-sel {
  color: #d4d44a;
}

.toolbar {
  position: absolute;
  left: 3px;
  top: 40px;
  width: 26px;
  display: flex;
  flex-direction: column;
  gap: 3px;
}

.tool-group {
  background: #303030;
  border-radius: 3px;
  overflow: hidden;
}

.tool {
  height: 23px;
  display: flex;
  align-items: center;
  justify-content: center;
}

.tool svg {
  width: 16px;
  height: 16px;
}

.tool.active {
  background: #4772b3;
}

.npanel {
  position: absolute;
  left: 668px;
  top: 35px;
  width: 166px;
  height: 298px;
  background: rgba(70, 70, 70, 0.72);
  padding: 0 10px 0 4px;
  box-sizing: border-box;
}

.np-title {
  height: 17px;
  margin-bottom: 4.300px;
  display: flex;
  align-items: center;
  gap: 4px;
  padding-left: 1px;
  font-size: 8px;
  color: #d4d4d4;
}

.np-label {
  height: 14.600px;
  line-height: 16px;
  color: #bbb;
}

.np-row {
  display: flex;
  align-items: center;
  height: 13.400px;
}

.np-field {
  width: 117px;
  height: 13px;
  background: #555;
  display: flex;
  justify-content: space-between;
  align-items: center;
  padding: 0 8px 0 10px;
  box-sizing: border-box;
  color: #c8c8c8;
}

.np-field.wide {
  width: 152px;
}

.np-field.key {
  background: #85772a;
  color: #e4e4d0;
}

.lock {
  margin-left: 16px;
  color: #b4b4b4;
}

.np-select {
  display: flex;
  justify-content: space-between;
  align-items: center;
  width: 152px;
  height: 13px;
  margin: 1.200px 0 -0.800px;
  background: #232323;
  border-radius: 3px;
  padding: 0 5px;
  box-sizing: border-box;
}

.np-tabs {
  position: absolute;
  left: 834px;
  top: 35px;
  width: 14px;
  height: 298px;
  padding-top: 2px;
  box-sizing: border-box;
  background: #252525;
  display: flex;
  flex-direction: column;
  gap: 2px;
  color: #bbb;
}

.np-tabs span {
  writing-mode: vertical-rl;
  height: 28px;
  display: flex;
  align-items: center;
  justify-content: center;
  background: #2e2e2e;
  border-radius: 0 3px 3px 0;
}

.np-tabs .active {
  background: #3d3d3d;
  color: #ddd;
}

/* graph editor */
.timeline {
  flex: 1;
  min-height: 0;
  display: flex;
  flex-direction: column;
  background: #2d2d2d;
}

.tl-head {
  position: relative;
  height: 17px;
  flex: none;
  display: flex;
  align-items: center;
  gap: 1px;
  background: #303030;
  padding-left: 5px;
}

.tl-menu {
  display: flex;
  margin-left: 4px;
  gap: 1px;
}

.tl-menu span {
  padding: 2px 4px;
  border-radius: 3px;
  margin-right: 1px;
}

.tl-menu .open {
  background: #454545;
}

.normalize {
  display: flex;
  align-items: center;
  margin-left: 2px;
  height: 12px;
}

.nm-icon {
  width: 12px;
  height: 12px;
  background: #474747;
  display: flex;
  align-items: center;
  justify-content: center;
  border-radius: 2px 0 0 2px;
}

.nm-text {
  background: #474747;
  height: 12px;
  line-height: 12px;
  width: 48px;
  padding-left: 6px;
  margin-left: 1px;
  box-sizing: border-box;
  color: #bdbdbd;
}

.nm-auto {
  width: 12px;
  height: 12px;
  background: #456a9c;
  display: flex;
  align-items: center;
  justify-content: center;
  border-radius: 0 2px 2px 0;
}

.tl-right {
  position: absolute;
  left: 669px;
  display: flex;
  align-items: center;
  gap: 1px;
}

.blue-btn,
.gray-btn {
  width: 12px;
  height: 12px;
  background: #4772b3;
  display: flex;
  align-items: center;
  justify-content: center;
  border-radius: 2px;
}

.gray-btn {
  background: #474747;
}

.tl-body {
  flex: 1;
  min-height: 0;
  display: flex;
}

.channels {
  width: 137px;
  flex: none;
  background: #232323;
}

.ch-search {
  height: 14px;
  display: flex;
  align-items: center;
  padding-top: 1px;
  box-sizing: border-box;
}

.ch-input {
  width: 120px;
  height: 12px;
  background: #262626;
  display: flex;
  align-items: center;
  gap: 4px;
  padding-left: 2px;
  box-sizing: border-box;
  color: #5c5c5c;
}

.ch-swap {
  width: 16px;
  height: 12px;
  background: #4c4c4c;
  line-height: 11px;
  text-align: center;
  border-radius: 0 2px 2px 0;
  font-size: 10px;
}

.ch-row {
  height: 12.300px;
  display: flex;
  align-items: center;
  gap: 1px;
  padding-left: 0;
  margin-bottom: 0.200px;
}

.c-obj {
  background: #1b4f80;
}

.c-act {
  background: #193550;
  padding-left: 4px;
}

.c-grp {
  background: #1d3629;
  padding-left: 9px;
}

.c-cur {
  background: #1a1a1a;
  padding-left: 10px;
}

.pinned {
  color: #4d7fa5;
}

.ic.white {
  color: #fff;
}

.ic.faded {
  color: #777;
}

.c-name {
  white-space: nowrap;
  margin-left: 1px;
  color: #aebccd;
}

.c-grp .c-name {
  color: #9db09f;
}

.c-obj .gold {
  color: #d8b45a;
}

.c-cur .orange {
  color: #e0962e;
}

.swatch {
  width: 4px;
  height: 11px;
  background: #3f8fe8;
  border-radius: 1px;
  margin-right: 2px;
}

.c-tail {
  margin-left: auto;
  display: flex;
  gap: 2px;
  padding-right: 2px;
}

.graph {
  width: 711px;
  height: 147px;
  display: block;
}

.frame {
  font-size: 7.500px;
  fill: #a8a8a8;
  text-anchor: middle;
}

.val {
  font-size: 8px;
  fill: #bbb;
  text-anchor: middle;
  font-weight: 500;
}

.pill {
  font-size: 8px;
  fill: #fff;
  text-anchor: middle;
}

/* outliner */
.outliner {
  height: 157px;
  flex: none;
  background: #282828;
  border-radius: 0 0 0 4px;
  overflow: hidden;
}

.ol-head {
  height: 18px;
  background: #2b2b2b;
  display: flex;
  align-items: center;
  gap: 1px;
  padding-left: 8px;
}

.ml {
  margin-left: 14px;
}

.search {
  display: flex;
  align-items: center;
  gap: 5px;
  height: 12px;
  background: #212121;
  color: #595959;
  border-radius: 3px;
  padding-left: 3px;
  box-sizing: border-box;
}

.ol-search {
  width: 78px;
  margin: 0 11px 0 13px;
}

.ol-row {
  height: 13.400px;
  display: flex;
  align-items: center;
  gap: 3px;
  padding-left: 15px;
  color: #b8b8b8;
  white-space: nowrap;
}

.ol-head + .ol-row {
  margin-top: 1px;
  padding-left: 14px;
}

.icon-bg {
  width: 12px;
  height: 12px;
  background: #4a4a4a;
  border-radius: 2px;
  display: flex;
  align-items: center;
  justify-content: center;
}

.orange-bg {
  background: #546d94;
}

.ic.orange-ic {
  color: #e8a050;
}

.ol-child {
  padding-left: 29px;
}

.ol-child .ic.tiny {
  margin-right: 2px;
}

.ol-child.selected {
  background: #2d4a7d;
  color: #e8a050;
}

.ol-name {
  width: 26px;
}

.ol-data {
  display: flex;
  align-items: center;
  gap: 6px;
}

.teal-box {
  width: 14px;
  height: 12px;
  background: #2f6b5e;
  border-radius: 3px;
  display: flex;
  align-items: center;
  justify-content: center;
}

.ol-tail {
  margin-left: auto;
  display: flex;
  gap: 4px;
  padding-right: 4px;
}

/* properties */
.props {
  flex: 1;
  min-height: 0;
  display: flex;
  flex-direction: column;
  background: #2e2e2e;
}

.pr-head {
  height: 18px;
  display: flex;
  align-items: center;
  gap: 1px;
  padding-left: 8px;
  flex: none;
}

.pr-search {
  width: 78px;
  margin-left: 24px;
}

.pr-opt {
  width: 12px;
  height: 12px;
  background: #222;
  border-radius: 3px;
  margin-left: 15px;
  display: flex;
  align-items: center;
  justify-content: center;
}

.pr-body {
  flex: 1;
  min-height: 0;
  display: flex;
}

.pr-tabs {
  width: 18px;
  flex: none;
  background: #1e1e1e;
  margin-left: 1px;
  border-radius: 0 3px 0 0;
  overflow: hidden;
  padding-top: 3.500px;
  box-sizing: border-box;
}

.pr-tab {
  display: flex;
  align-items: center;
  justify-content: center;
}

.pr-tab .ic {
  color: inherit;
  width: 11px;
  height: 11px;
}

.pr-tab.active {
  background: #3a3a3a;
}

.pr-content {
  flex: 1;
  min-width: 0;
  overflow: hidden;
  padding-left: 5px;
  background: #303030;
}

.crumb {
  height: 22px;
  display: flex;
  align-items: center;
  gap: 7px;
  padding-left: 3px;
  padding-top: 3px;
  box-sizing: border-box;
}

.ic.pin-r {
  margin-left: auto;
  margin-right: 3px;
  color: #777;
}

.name-row {
  height: 26px;
  display: flex;
  align-items: center;
  gap: 1px;
  padding-left: 3px;
  padding-top: 3px;
  box-sizing: border-box;
}

.name-field {
  flex: 1;
  height: 12px;
  line-height: 12px;
  background: #1d1d1d;
  border-radius: 3px;
  margin: 0 2px 0 1px;
  padding-left: 4px;
}

.panel {
  background: #3b3b3b;
  border-radius: 3px 0 0 3px;
  margin-bottom: 1.200px;
}

.panel-head {
  height: 16.600px;
  display: flex;
  align-items: center;
  gap: 3px;
  padding-left: 4px;
  position: relative;
  color: #c4c4c4;
}

.open .panel-head {
  height: 18px;
  margin-bottom: 5.800px;
}

.grip {
  position: absolute;
  right: 3px;
  top: 6px;
  width: 8px;
  height: 5px;
  background: repeating-linear-gradient(#666 0 1px, transparent 1px 2px);
}

.pf-group {
  margin-bottom: 3.600px;
}

.pf-row {
  height: 13.400px;
  display: flex;
  align-items: center;
}

.pf-label {
  width: 53px;
  margin-right: 6px;
  text-align: right;
  color: #b4b4b4;
  flex: none;
  white-space: nowrap;
}

.pf-field {
  width: 58px;
  height: 13px;
  background: #545454;
  flex: none;
  text-align: center;
  line-height: 13px;
  color: #d0d0d0;
}

.pf-field.key {
  background: #85772a;
  color: #eee;
}

.pf-select {
  width: 58px;
  height: 12px;
  flex: none;
  background: #262626;
  border-radius: 3px;
  display: flex;
  align-items: center;
  justify-content: space-between;
  padding: 0 2px 0 4px;
  box-sizing: border-box;
  color: #ccc;
}

.pf-row .lock {
  margin-left: 2px;
}

.lock-space {
  width: 12px;
  flex: none;
}

.dot {
  width: 2.500px;
  height: 2.500px;
  background: #e0e0e0;
  border-radius: 50%;
  margin-left: 6px;
  flex: none;
}

.dot.diamond {
  width: 6px;
  height: 6px;
  background: #fff;
  border-radius: 0;
  transform: rotate(45deg);
  margin-left: 4px;
}

.delta {
  height: 17.500px;
  padding-top: 2px;
  box-sizing: border-box;
  display: flex;
  align-items: center;
  gap: 3px;
  padding-left: 15px;
  color: #b8b8b8;
}

/* status bar */
.status {
  height: 13px;
  flex: none;
  display: flex;
  align-items: center;
  gap: 3px;
  padding-left: 3px;
  background: #161616;
  color: #a0a0a0;
}

.kbd {
  border: 1px solid #5a5a5a;
  border-radius: 2px;
  font-size: 6.500px;
  padding: 0 1.500px;
  line-height: 9px;
}

.status-right {
  margin-left: auto;
  display: flex;
  align-items: center;
  gap: 5px;
  padding-right: 4px;
}

.st-sep {
  width: 1px;
  height: 9px;
  background: #555;
}

/* channel menu */
.menu {
  position: absolute;
  left: 123px;
  top: 14px;
  width: 169px;
  height: 340px;
  background: #181818;
  border-radius: 0 0 4px 4px;
  padding: 0 2px 0 1px;
  box-sizing: border-box;
  box-shadow: 0 1px 5px rgba(0, 0, 0, 0.4);
  color: #bcbcbc;
}

.menu-row {
  height: 13.300px;
  display: flex;
  align-items: center;
  padding: 0 0 0 20px;
  border-radius: 3px;
  white-space: nowrap;
}

.menu-row.hover {
  background: #434343;
  color: #d0d0d0;
}

.menu-key {
  margin-left: auto;
  color: #6c6c6c;
}

.menu-sub {
  width: 7px;
  font-size: 6px;
  color: #8c8c8c;
  text-align: right;
}

.menu-sep {
  height: 4.600px;
  position: relative;
}

.menu-sep::after {
  content: "";
  position: absolute;
  left: 4px;
  right: 4px;
  top: 2px;
  height: 1px;
  background: #2a2a2a;
}

.arrow {
  position: absolute;
  left: 220px;
  top: 289px;
  width: 60px;
  height: 45px;
}
</style>

<style>
html,
body {
  background: #151515;
}
</style>
